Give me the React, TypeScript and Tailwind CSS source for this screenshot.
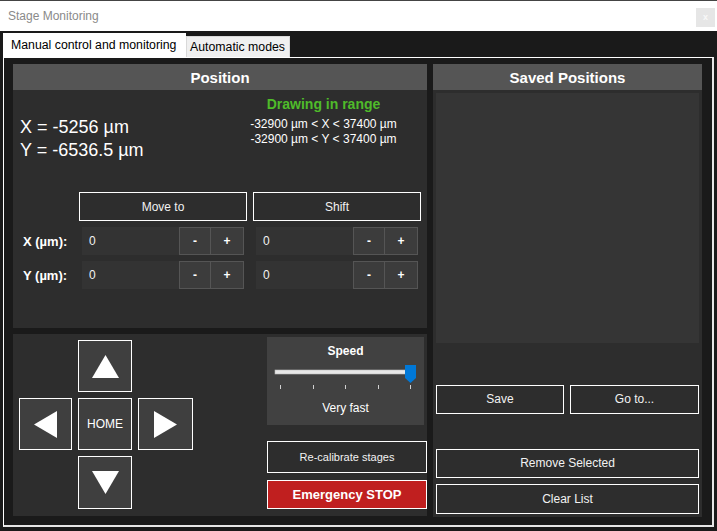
import React from "react";

const font = "font-['Liberation_Sans',Arial,sans-serif]";

function Btn({ children, className = "", size = "text-[12px]" }: { children: React.ReactNode; className?: string; size?: string }) {
  return (
    <div className={`border border-white bg-[#2d2d2d] text-[#f2f2f2] ${size} flex items-center justify-center ${className}`}>
      {children}
    </div>
  );
}

function Spin({ value }: { value: string }) {
  return (
    <div className="flex h-[28px]">
      <div className="w-[97px] bg-[#333333] text-[#f2f2f2] text-[12px] pl-[7px] flex items-center">{value}</div>
      <div className="w-[32px] bg-[#3c3c3c] border border-[#555555] text-white text-[12px] font-bold flex items-center justify-center">-</div>
      <div className="w-[33px] bg-[#3c3c3c] border border-[#555555] border-l-0 text-white text-[12px] font-bold flex items-center justify-center">+</div>
    </div>
  );
}

function Arrow({ dir }: { dir: "up" | "down" | "left" | "right" }) {
  const pts = {
    up: "13.5,0 27,23 0,23",
    down: "0,0 27,0 13.5,23",
    left: "23,0 23,27 0,13.5",
    right: "0,0 23,13.5 0,27",
  }[dir];
  const vert = dir === "up" || dir === "down";
  return (
    <div className="bg-[#3f3f3f] border border-white flex items-center justify-center">
      <svg width={vert ? 27 : 23} height={vert ? 23 : 27}>
        <polygon points={pts} fill="#ffffff" />
      </svg>
    </div>
  );
}

function PanelHeader({ title }: { title: string }) {
  return (
    <div className="h-[26px] pt-[3px] bg-[#555555] text-white text-[15px] font-bold flex items-center justify-center">{title}</div>
  );
}

export default function App() {
  return (
    <div className={`w-[717px] h-[531px] bg-[#1a1a1a] flex flex-col overflow-hidden ${font}`}>
      {/* title bar */}
      <div className="h-px bg-[#444444]" />
      <div className="h-[30px] bg-white flex items-center pl-[8px] pr-[2px]">
        <span className="text-[12px] text-[#8a8a8a]">Stage Monitoring</span>
        <div className="ml-auto mt-[3px] w-[19px] h-[19px] bg-[#e6e6e6] flex items-center justify-center text-[9px] text-[#f8f8f8] font-bold">x</div>
      </div>

      {/* tabs */}
      <div className="h-[26px] flex items-end pl-[3px]">
        <div className="h-[24px] w-[183px] bg-white text-black text-[12.3px] pl-[8px] flex items-center">Manual control and monitoring</div>
        <div className="h-[21px] w-[104px] bg-[#f0f0f0] border border-[#d9d9d9] border-b-0 text-black text-[12.3px] pl-[3px] flex items-center">Automatic modes</div>
      </div>

      {/* tab page */}
      <div className="ml-[3px] w-[711px] h-[470px] border-l border-t border-white border-r-2 border-b-2 border-r-[#e6e6e6] border-b-[#e6e6e6] bg-[#1a1a1a] pl-[9px] pt-[6px]">
        <div className="grid grid-cols-[414px_269px] gap-[6px]">
          {/* left column */}
          <div className="flex flex-col gap-[6px]">
            {/* position panel */}
            <div className="h-[264px] flex flex-col">
              <PanelHeader title="Position" />
              <div className="flex-1 bg-[#2d2d2d]">
                <div className="grid grid-cols-[225px_171px] h-[100px]">
                  <div className="pl-[7px] pt-[26px] text-white text-[18px] leading-[23px]">
                    <div>X = -5256 µm</div>
                    <div>Y = -6536.5 µm</div>
                  </div>
                  <div className="text-center pt-[5px]">
                    <div className="text-[#4fbb2a] text-[14px] font-bold leading-[18px]">Drawing in range</div>
                    <div className="mt-[4px] text-white text-[12px] leading-[15px]">
                      <div>-32900 µm &lt; X &lt; 37400 µm</div>
                      <div>-32900 µm &lt; Y &lt; 37400 µm</div>
                    </div>
                  </div>
                </div>

                <div className="mt-[2px] pl-[66px] flex gap-[6px]">
                  <Btn className="w-[168px] h-[29px]">Move to</Btn>
                  <Btn className="w-[168px] h-[29px]">Shift</Btn>
                </div>

                {["X (µm):", "Y (µm):"].map((label) => (
                  <div key={label} className="mt-[6px] flex items-center">
                    <div className="w-[69px] pl-[10px] pt-[2px] text-white text-[13px] font-bold">{label}</div>
                    <Spin value="0" />
                    <div className="w-[12px]" />
                    <Spin value="0" />
                  </div>
                ))}
              </div>
            </div>

            {/* motion panel */}
            <div className="h-[182px] bg-[#2d2d2d] flex pl-[6px] pt-[3px]">
              <div className="mt-[3px] grid grid-cols-[53px_54px_55px] grid-rows-[52px_52px_53px] gap-[6px]">
                <div />
                <Arrow dir="up" />
                <div />
                <Arrow dir="left" />
                <div className="bg-[#3f3f3f] border border-white text-white text-[12px] flex items-center justify-center">HOME</div>
                <Arrow dir="right" />
                <div />
                <Arrow dir="down" />
                <div />
              </div>

              <div className="ml-auto w-[160px] flex flex-col">
                <div className="w-[157px] h-[88px] bg-[#414141] flex flex-col items-center">
                  <div className="pt-[7px] text-white text-[12px] font-bold leading-[14px]">Speed</div>
                  <svg width="157" height="30" className="mt-[4px]">
                    <rect x="8" y="8" width="136" height="4" fill="#e7e7e7" stroke="#bdbdbd" strokeWidth="0.6" />
                    {[13, 46, 78, 111, 143].map((x) => (
                      <line key={x} x1={x + 0.5} x2={x + 0.5} y1="23" y2="27" stroke="#d0d0d0" strokeWidth="1" />
                    ))}
                    <polygon points="138,3 149,3 149,16 143.5,21 138,16" fill="#0078d7" />
                  </svg>
                  <div className="mt-[9px] text-white text-[12px] leading-[14px]">Very fast</div>
                </div>
                <Btn className="mt-[16px] h-[32px]" size="text-[11px]">Re-calibrate stages</Btn>
                <div className="mt-[7px] h-[29px] bg-[#c01f1f] border border-white text-white text-[13px] font-bold flex items-center justify-center">
                  Emergency STOP
                </div>
              </div>
            </div>
          </div>

          {/* saved positions */}
          <div className="h-[451px] flex flex-col">
            <PanelHeader title="Saved Positions" />
            <div className="flex-1 bg-[#2d2d2d] p-[3px] flex flex-col">
              <div className="h-[250px] bg-[#353535]" />
              <div className="mt-[42px] flex gap-[6px]">
                <Btn className="w-[128px] h-[29px]">Save</Btn>
                <Btn className="w-[129px] h-[29px]">Go to...</Btn>
              </div>
              <Btn className="mt-[35px] h-[29px]">Remove Selected</Btn>
              <Btn className="mt-[6px] h-[30px]">Clear List</Btn>
            </div>
          </div>
        </div>
      </div>
    </div>
  );
}
